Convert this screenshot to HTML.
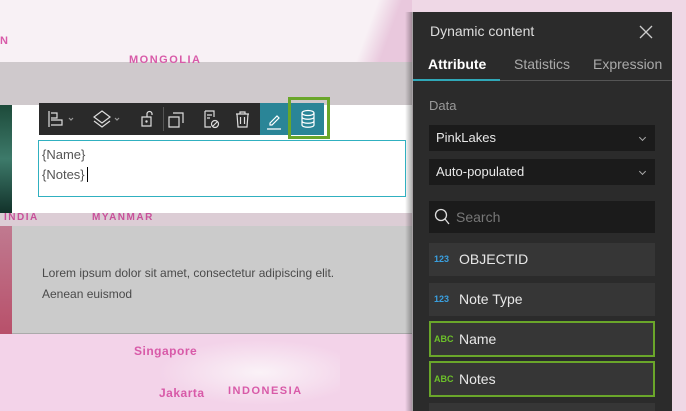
<!DOCTYPE html>
<html style="width:686px;height:411px;overflow:hidden"><head><style>
*{margin:0;padding:0;box-sizing:border-box}
body{width:686px;height:411px;overflow:hidden;position:relative;font-family:"Liberation Sans",sans-serif;background:#f7eff4}
.a{position:absolute}
.lbl{color:#d85aa8;font-weight:bold;font-size:11px;letter-spacing:1.5px}
.item{position:absolute;left:429px;width:226px;height:33px;background:#363636;color:#e8e8e8;font-size:14px;line-height:33px;padding-left:30px}
.item i{position:absolute;left:5px;font-style:normal;font-size:9px;font-weight:bold}
.dd{position:absolute;left:429px;width:226px;height:26px;background:#1b1b1b;color:#e8e8e8;font-size:13px;line-height:26px;padding-left:7px}
.dd:after{content:"";position:absolute;right:10px;top:10px;width:4px;height:4px;border-right:1px solid #aaa;border-bottom:1px solid #aaa;transform:rotate(45deg)}
</style></head><body>
<div class="a" style="left:0;top:0;width:412px;height:62px;background:#f8f1f5"></div>
<div class="a" style="left:330px;top:0;width:82px;height:105px;background:linear-gradient(110deg,transparent 40%,#e9c8dd 60%)"></div>
<div class="a" style="left:0;top:62px;width:412px;height:43px;background:#cfc9cc"></div>
<div class="a lbl" style="left:0;top:35px">N</div>
<div class="a lbl" style="left:129px;top:54px">MONGOLIA</div>
<div class="a" style="left:0;top:105px;width:412px;height:108px;background:#fff"></div>
<div class="a" style="left:0;top:105px;width:12px;height:108px;background:linear-gradient(#1d4a3a,#3d7a6a 50%,#12322a)"></div>
<div class="a" style="left:0;top:213px;width:412px;height:13px;background:#dccdd5"></div>
<div class="a lbl" style="left:4px;top:212px;font-size:10px;color:#c8509a">INDIA</div>
<div class="a lbl" style="left:92px;top:212px;font-size:10px;color:#c8509a">MYANMAR</div>
<div class="a" style="left:0;top:226px;width:412px;height:108px;background:#cbcbcb;border-bottom:1px solid #aaa"></div>
<div class="a" style="left:0;top:226px;width:12px;height:108px;background:linear-gradient(#c07a90,#b8506a)"></div>
<div class="a" style="left:42px;top:263px;font-size:12px;color:#4a4a4a;line-height:21px">Lorem ipsum dolor sit amet, consectetur adipiscing elit.<br>Aenean euismod</div>
<div class="a" style="left:0;top:334px;width:412px;height:77px;background:#f3d3e9"></div>
<div class="a" style="left:140px;top:334px;width:200px;height:77px;background:radial-gradient(ellipse at 60% 50%,#faf2f7 0%,transparent 60%)"></div>
<div class="a lbl" style="left:134px;top:344px;letter-spacing:0.5px;font-size:12px">Singapore</div>
<div class="a lbl" style="left:159px;top:386px;letter-spacing:0.5px;font-size:12px">Jakarta</div>
<div class="a lbl" style="left:228px;top:385px;font-size:11px">INDONESIA</div>
<div class="a" style="left:405px;top:12px;width:8px;height:399px;background:linear-gradient(90deg,transparent,rgba(0,0,0,.35))"></div>
<div class="a" style="left:672px;top:0;width:14px;height:411px;background:#efd8e6"></div>
<div class="a" style="left:412px;top:0;width:274px;height:12px;background:#efd8e6"></div>
<!-- toolbar -->
<div class="a" style="left:39px;top:103px;width:285px;height:32px;background:#2a2a2a"></div>
<div class="a" style="left:163px;top:107px;width:1px;height:24px;background:#555"></div>
<div class="a" style="left:260px;top:103px;width:64px;height:32px;background:#2a8597"></div>
<svg class="a" style="left:39px;top:103px" width="290" height="32" fill="none" stroke="#ddd" stroke-width="1.2">
<path d="M10 8v16M12 10h6v5h-6M12 17h11v5h-11"/><path d="M30 15l2 2 2-2" stroke="#999"/>
<path d="M63 8l8 6-8 6-8-6z M55 18l8 6 8-6"/><path d="M76 15l2 2 2-2" stroke="#999"/>
<path d="M103 14h9v9h-9z M108 14v-3a2.5 2.5 0 0 1 5 0v1"/><circle cx="107.5" cy="18.5" r="0.6" fill="#ddd"/>
<path d="M134 10h10v10M130 14h10v10h-10z"/>
<path d="M166 8h9v6M166 8v16h6M168 12h5M168 15h3"/><circle cx="176" cy="21" r="3.5"/><path d="M173.5 23.5l5-5"/>
<path d="M197 11h13M201 11v-2h5v2M198 11l1 13h9l1-13M201.5 14v7M205.5 14v7"/>
<path d="M231 20l7-7 2 2-7 7h-2z M228 26h14" stroke="#fff"/>
<ellipse cx="269" cy="10" rx="6" ry="2.5" stroke="#fff"/><path d="M263 10v12c0 3 12 3 12 0v-12M263 14c0 3 12 3 12 0M263 18c0 3 12 3 12 0" stroke="#fff"/>
</svg>
<div class="a" style="left:288px;top:97px;width:42px;height:42px;border:3px solid #6aa62a"></div>
<div class="a" style="left:38px;top:140px;width:368px;height:57px;border:1px solid #30b0c0;background:#fff;font-size:13px;color:#555;line-height:20px;padding:4px 3px">{Name}<br>{Notes}<span style="border-left:1px solid #000;margin-left:2px"></span></div>
<!-- panel -->
<div class="a" style="left:413px;top:12px;width:259px;height:399px;background:#2b2b2b"></div>
<div class="a" style="left:430px;top:23px;color:#ddd;font-size:14px">Dynamic content</div>
<svg class="a" style="left:639px;top:25px" width="14" height="14" stroke="#ccc" stroke-width="1.3"><path d="M1 1l12 12M13 1l-12 12"/></svg>
<div class="a" style="left:428px;top:56px;color:#fff;font-size:14px;font-weight:bold">Attribute</div>
<div class="a" style="left:514px;top:56px;color:#aaa;font-size:14px">Statistics</div>
<div class="a" style="left:593px;top:56px;color:#aaa;font-size:14px">Expression</div>
<div class="a" style="left:413px;top:80px;width:259px;height:1px;background:#555"></div>
<div class="a" style="left:413px;top:79px;width:87px;height:2px;background:#30a8b8"></div>
<div class="a" style="left:429px;top:98px;color:#999;font-size:13px">Data</div>
<div class="dd" style="top:125px">PinkLakes</div>
<div class="dd" style="top:159px">Auto-populated</div>
<div class="a" style="left:429px;top:201px;width:226px;height:32px;background:#1b1b1b;color:#777;font-size:14px;line-height:32px;padding-left:27px">Search</div>
<svg class="a" style="left:434px;top:208px" width="16" height="17" fill="none" stroke="#ddd" stroke-width="1.3"><circle cx="7" cy="7" r="5.5"/><path d="M11 11l4 5"/></svg>
<div class="item" style="top:243px"><i style="color:#3aa0e0">123</i>OBJECTID</div>
<div class="item" style="top:283px"><i style="color:#3aa0e0">123</i>Note Type</div>
<div class="item" style="top:321px;border:2px solid #6aa62a;height:36px;line-height:32px;padding-left:28px"><i style="color:#6cc02a;left:3px">ABC</i>Name</div>
<div class="item" style="top:361px;border:2px solid #6aa62a;height:36px;line-height:32px;padding-left:28px"><i style="color:#6cc02a;left:3px">ABC</i>Notes</div>
<div class="item" style="top:403px;height:8px"></div>
</body></html>
